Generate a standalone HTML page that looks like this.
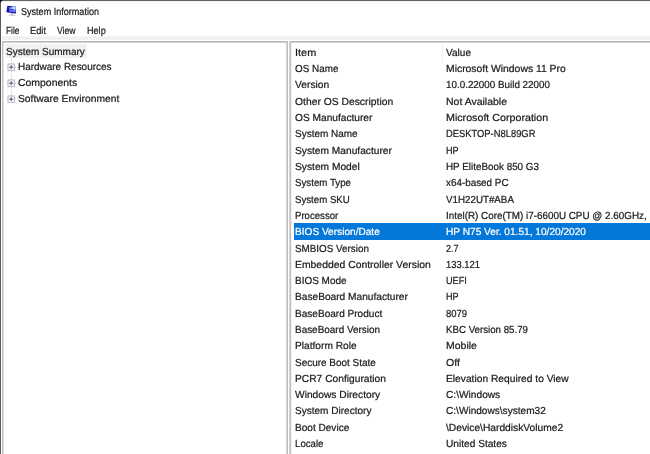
<!DOCTYPE html>
<html><head><meta charset="utf-8"><title>System Information</title>
<style>
html,body{margin:0;padding:0;}
body{width:650px;height:454px;overflow:hidden;background:#fff;position:relative;font-family:"Liberation Sans",sans-serif;color:#1a1a1a;font-size:10.2px;}
.t{position:absolute;white-space:nowrap;text-rendering:geometricPrecision;filter:blur(0.25px);-webkit-text-stroke:0.22px currentColor;line-height:16px;height:16px;transform-origin:0 50%;}
.abs{position:absolute;}
.sel{color:#fff;}
</style></head><body>

<div class="abs" style="left:0px;top:0px;width:650px;height:1px;background:#616161"></div>
<div class="abs" style="left:0px;top:1px;width:650px;height:1px;background:#f4f4f4"></div>
<div class="abs" style="left:0px;top:0px;width:1px;height:454px;background:#5a5a5a"></div>
<div class="abs" style="left:0;top:0;width:3px;height:3px;background:radial-gradient(circle at 3px 3px,#fff 0,#fff 1.6px,#333 2.6px,#000 3.4px)"></div>
<div class="abs" style="left:2px;top:36px;width:648px;height:1px;background:#f5f5f5"></div>
<div class="abs" style="left:2px;top:37px;width:648px;height:2px;background:#f0f0f0"></div>
<div class="abs" style="left:2px;top:39px;width:648px;height:1px;background:#f3f3f3"></div>
<div class="abs" style="left:2px;top:41px;width:286px;height:1px;background:#b9b9b9"></div>
<div class="abs" style="left:2px;top:42px;width:286px;height:1px;background:#cfcfcf"></div>
<div class="abs" style="left:290px;top:41px;width:360px;height:1px;background:#b9b9b9"></div>
<div class="abs" style="left:290px;top:42px;width:360px;height:1px;background:#cfcfcf"></div>
<div class="abs" style="left:2px;top:41px;width:1px;height:413px;background:#c0c0c0"></div>
<div class="abs" style="left:3px;top:43px;width:1px;height:411px;background:#e2e2e2"></div>
<div class="abs" style="left:286px;top:43px;width:1px;height:411px;background:#d2d2d2"></div>
<div class="abs" style="left:287px;top:41px;width:1px;height:413px;background:#c0c0c0"></div>
<div class="abs" style="left:289px;top:41px;width:1px;height:413px;background:#d4d4d4"></div>
<div class="abs" style="left:290px;top:41px;width:1px;height:413px;background:#c0c0c0"></div>
<div class="abs" style="left:291px;top:43px;width:1px;height:411px;background:#f2f2f2"></div>
<div class="abs" style="left:442px;top:44px;width:1px;height:18px;background:#efefef"></div>
<svg class="abs" style="left:4px;top:3px" width="16" height="16" viewBox="4 3 16 16"><defs><filter id="bl" x="-20%" y="-20%" width="140%" height="140%"><feGaussianBlur stdDeviation="0.45"/></filter><filter id="bl2" x="-20%" y="-20%" width="140%" height="140%"><feGaussianBlur stdDeviation="0.3"/></filter></defs><g filter="url(#bl)"><polygon points="7.4,5.7 15.7,6.5 16.1,13.5 6.3,12.2" fill="#1515b6"/><polygon points="9.0,7.3 15.3,7.0 15.5,12.0 9.4,11.5" fill="#7b93ec"/><polygon points="11.8,6.6 15.6,6.8 15.7,9.4 12.6,9.0" fill="#ccd6fa"/><path d="M9.3 9.6L13.6 10.2" stroke="#2626b8" stroke-width="0.9"/><polygon points="9,14.7 15,14.7 15.6,15.7 8.4,15.7" fill="#c2c2c2"/><rect x="11" y="13.3" width="2.4" height="1.4" fill="#aab"/></g></svg>
<div class="t " style="left:21.0px;top:5px;transform:scaleX(0.8887);">System Information</div>
<div class="t " style="left:5.5px;top:24px;transform:scaleX(0.8179);">File</div>
<div class="t " style="left:30.1px;top:24px;transform:scaleX(0.9084);">Edit</div>
<div class="t " style="left:56.9px;top:24px;transform:scaleX(0.8474);">View</div>
<div class="t " style="left:87.0px;top:24px;transform:scaleX(0.8926);">Help</div>
<div class="abs" style="left:5px;top:44px;width:82px;height:14px;background:#f1f1f1"></div>
<div class="t " style="left:6.2px;top:45px;transform:scaleX(0.9805);">System Summary</div>
<div class="abs" style="left:11px;top:57px;width:0;height:39px;border-left:1px dotted #cdcdcd"></div>
<div class="t " style="left:18.1px;top:60px;transform:scaleX(0.9771);">Hardware Resources</div>
<div class="abs" style="left:14px;top:66.7px;width:4px;height:0;border-top:1px dotted #c8c8c8"></div>
<svg class="abs" style="left:6px;top:62.05px" width="10" height="10" viewBox="0 0 10 10"><g filter="url(#bl2)"><rect x="2" y="2" width="6.3" height="6.3" fill="#fff" stroke="#aeb2c4" stroke-width="1"/><path d="M3.2 5.15H7.1M5.15 3.2V7.1" stroke="#4a5068" stroke-width="1" fill="none"/></g></svg>
<div class="t " style="left:18.1px;top:76px;transform:scaleX(1.0248);">Components</div>
<div class="abs" style="left:14px;top:82.5px;width:4px;height:0;border-top:1px dotted #c8c8c8"></div>
<svg class="abs" style="left:6px;top:77.85px" width="10" height="10" viewBox="0 0 10 10"><g filter="url(#bl2)"><rect x="2" y="2" width="6.3" height="6.3" fill="#fff" stroke="#aeb2c4" stroke-width="1"/><path d="M3.2 5.15H7.1M5.15 3.2V7.1" stroke="#4a5068" stroke-width="1" fill="none"/></g></svg>
<div class="t " style="left:18.1px;top:92px;transform:scaleX(1.0110);">Software Environment</div>
<div class="abs" style="left:14px;top:98.3px;width:4px;height:0;border-top:1px dotted #c8c8c8"></div>
<svg class="abs" style="left:6px;top:93.65px" width="10" height="10" viewBox="0 0 10 10"><g filter="url(#bl2)"><rect x="2" y="2" width="6.3" height="6.3" fill="#fff" stroke="#aeb2c4" stroke-width="1"/><path d="M3.2 5.15H7.1M5.15 3.2V7.1" stroke="#4a5068" stroke-width="1" fill="none"/></g></svg>
<div class="t " style="left:295.0px;top:46px;transform:scaleX(1.0711);">Item</div>
<div class="t " style="left:446.0px;top:46px;transform:scaleX(0.9870);">Value</div>
<div class="t " style="left:295.0px;top:62px;transform:scaleX(0.9721);">OS Name</div>
<div class="t " style="left:446.0px;top:62px;transform:scaleX(1.0186);">Microsoft Windows 11 Pro</div>
<div class="t " style="left:295.0px;top:78px;transform:scaleX(1.0056);">Version</div>
<div class="t " style="left:446.0px;top:78px;transform:scaleX(0.9661);">10.0.22000 Build 22000</div>
<div class="t " style="left:295.0px;top:95px;transform:scaleX(1.0140);">Other OS Description</div>
<div class="t " style="left:446.0px;top:95px;transform:scaleX(1.0283);">Not Available</div>
<div class="t " style="left:295.0px;top:111px;transform:scaleX(0.9977);">OS Manufacturer</div>
<div class="t " style="left:446.0px;top:111px;transform:scaleX(1.0484);">Microsoft Corporation</div>
<div class="t " style="left:295.0px;top:127px;transform:scaleX(0.9797);">System Name</div>
<div class="t " style="left:446.0px;top:127px;transform:scaleX(0.9201);">DESKTOP-N8L89GR</div>
<div class="t " style="left:295.0px;top:144px;transform:scaleX(1.0008);">System Manufacturer</div>
<div class="t " style="left:446.0px;top:144px;transform:scaleX(0.8915);">HP</div>
<div class="t " style="left:295.0px;top:160px;transform:scaleX(1.0034);">System Model</div>
<div class="t " style="left:446.0px;top:160px;transform:scaleX(0.9677);">HP EliteBook 850 G3</div>
<div class="t " style="left:295.0px;top:176px;transform:scaleX(0.9537);">System Type</div>
<div class="t " style="left:446.0px;top:176px;transform:scaleX(0.9688);">x64-based PC</div>
<div class="t " style="left:295.0px;top:193px;transform:scaleX(0.9480);">System SKU</div>
<div class="t " style="left:446.0px;top:193px;transform:scaleX(0.9594);">V1H22UT#ABA</div>
<div class="t " style="left:295.0px;top:209px;transform:scaleX(0.9426);">Processor</div>
<div class="t " style="left:446.0px;top:209px;transform:scaleX(0.9679);">Intel(R) Core(TM) i7-6600U CPU @ 2.60GHz,</div>
<div class="abs" style="left:293.5px;top:223px;width:357px;height:16.8px;background:#0478d9"></div>
<div class="t sel" style="left:295.0px;top:225px;transform:scaleX(0.9914);">BIOS Version/Date</div>
<div class="t sel" style="left:446.0px;top:225px;transform:scaleX(0.9938);">HP N75 Ver. 01.51, 10/20/2020</div>
<div class="t " style="left:295.0px;top:242px;transform:scaleX(0.9674);">SMBIOS Version</div>
<div class="t " style="left:446.0px;top:242px;transform:scaleX(0.8830);">2.7</div>
<div class="t " style="left:295.0px;top:258px;transform:scaleX(1.0203);">Embedded Controller Version</div>
<div class="t " style="left:446.0px;top:258px;transform:scaleX(0.9204);">133.121</div>
<div class="t " style="left:295.0px;top:274px;transform:scaleX(0.9794);">BIOS Mode</div>
<div class="t " style="left:446.0px;top:274px;transform:scaleX(0.8983);">UEFI</div>
<div class="t " style="left:295.0px;top:290px;transform:scaleX(0.9968);">BaseBoard Manufacturer</div>
<div class="t " style="left:446.0px;top:290px;transform:scaleX(0.8915);">HP</div>
<div class="t " style="left:295.0px;top:307px;transform:scaleX(0.9874);">BaseBoard Product</div>
<div class="t " style="left:446.0px;top:307px;transform:scaleX(0.9305);">8079</div>
<div class="t " style="left:295.0px;top:323px;transform:scaleX(0.9752);">BaseBoard Version</div>
<div class="t " style="left:446.0px;top:323px;transform:scaleX(0.9524);">KBC Version 85.79</div>
<div class="t " style="left:295.0px;top:339px;transform:scaleX(0.9993);">Platform Role</div>
<div class="t " style="left:446.0px;top:339px;transform:scaleX(1.0282);">Mobile</div>
<div class="t " style="left:295.0px;top:356px;transform:scaleX(0.9781);">Secure Boot State</div>
<div class="t " style="left:446.0px;top:356px;transform:scaleX(1.0317);">Off</div>
<div class="t " style="left:295.0px;top:372px;transform:scaleX(1.0040);">PCR7 Configuration</div>
<div class="t " style="left:446.0px;top:372px;transform:scaleX(1.0042);">Elevation Required to View</div>
<div class="t " style="left:295.0px;top:388px;transform:scaleX(1.0033);">Windows Directory</div>
<div class="t " style="left:446.0px;top:388px;transform:scaleX(0.9972);">C:\Windows</div>
<div class="t " style="left:295.0px;top:404px;transform:scaleX(0.9853);">System Directory</div>
<div class="t " style="left:446.0px;top:404px;transform:scaleX(0.9901);">C:\Windows\system32</div>
<div class="t " style="left:295.0px;top:421px;transform:scaleX(0.9880);">Boot Device</div>
<div class="t " style="left:446.0px;top:421px;transform:scaleX(1.0036);">\Device\HarddiskVolume2</div>
<div class="t " style="left:295.0px;top:437px;transform:scaleX(0.9488);">Locale</div>
<div class="t " style="left:446.0px;top:437px;transform:scaleX(0.9956);">United States</div>
</body></html>
